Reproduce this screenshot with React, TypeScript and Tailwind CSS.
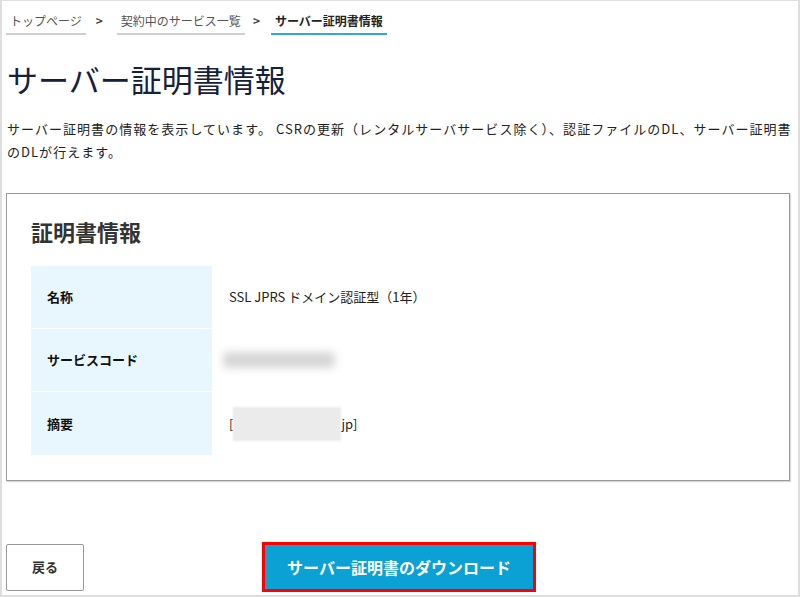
import React from "react";

const font = { fontFamily: '"Noto Sans CJK JP", "Noto Sans", sans-serif' };

function Crumb({ children, active }: { children: React.ReactNode; active?: boolean }) {
  return (
    <span
      className={
        "inline-block px-[4px] pb-[2px] text-[12px] leading-[20px] border-b-2 " +
        (active ? "border-[#2fa9dd] text-[#222] font-bold" : "border-[#d0d0d0] text-[#555]")
      }
    >
      {children}
    </span>
  );
}

function Row({ label, children }: { label: string; children: React.ReactNode }) {
  return (
    <div className="flex h-[63px] border-b border-white last:border-b-0">
      <div className="w-[181px] bg-[#e8f6fd] flex items-center pl-[16px] text-[13px] font-bold text-[#111]">
        {label}
      </div>
      <div className="flex-1 flex items-center pl-[17px] text-[13px] text-[#222]">{children}</div>
    </div>
  );
}

export default function App() {
  return (
    <div
      className="w-[800px] h-[597px] bg-white border-l-2 border-r-2 border-t border-b-2 border-[#dedede] overflow-hidden relative"
      style={font}
    >
      <div className="flex items-center pt-[10px] pl-[4px]">
        <Crumb>トップページ</Crumb>
        <span className="ml-[10px] mr-[14px] text-[12px] font-bold text-[#444] pb-[4px]">&gt;</span>
        <Crumb>契約中のサービス一覧</Crumb>
        <span className="ml-[8px] mr-[11px] text-[12px] font-bold text-[#444] pb-[4px]">&gt;</span>
        <Crumb active>サーバー証明書情報</Crumb>
      </div>

      <h1 className="mt-[24px] pl-[5px] text-[31px] leading-[40px] text-[#14213d] font-normal">
        サーバー証明書情報
      </h1>

      <p className="mt-[18px] pl-[5px] pr-[4px] text-[13px] leading-[23px] text-[#222] tracking-[0.08em] whitespace-nowrap">
        サーバー証明書の情報を表示しています。 CSRの更新（レンタルサーバサービス除く）、認証ファイルのDL、サーバー証明書
        <br />
        のDLが行えます。
      </p>

      <div className="mt-[30px] ml-[4px] w-[784px] h-[288px] border border-[#9a9a9a] shadow-[1px_1px_1px_rgba(0,0,0,0.15)] pt-[22px] px-[24px]">
        <h2 className="text-[22px] leading-[30px] font-bold text-[#333]">証明書情報</h2>
        <div className="mt-[20px]">
          <Row label="名称">SSL JPRS ドメイン認証型（1年）</Row>
          <Row label="サービスコード">
            <div className="ml-[-6px] w-[112px] h-[16px] bg-[#d6d6d6] blur-[4px] rounded" />
          </Row>
          <Row label="摘要">
            <span>[</span>
            <span className="inline-block w-[108px] h-[34px] bg-[#ebebeb] blur-[1px]" />
            <span>jp]</span>
          </Row>
        </div>
      </div>

      <div className="flex items-center mt-[61px] ml-[4px]">
        <button className="w-[78px] h-[47px] border border-[#999] rounded-[2px] bg-white text-[13px] font-bold text-[#333]">
          戻る
        </button>
        <button className="ml-[178px] w-[274px] h-[50px] border-[3px] border-[#ff0000] bg-[#0ba1d4] text-white text-[16px] font-bold">
          サーバー証明書のダウンロード
        </button>
      </div>
    </div>
  );
}
